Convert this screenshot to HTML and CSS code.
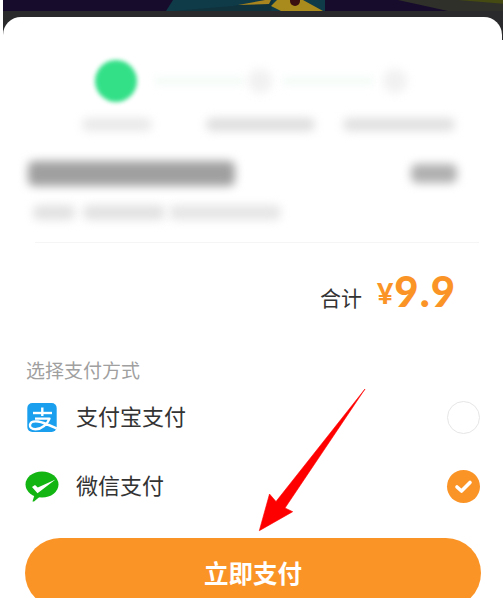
FILE: index.html
```html
<!DOCTYPE html>
<html lang="zh">
<head>
<meta charset="utf-8">
<title>支付</title>
<link rel="stylesheet" href="styles.css">
</head>
<body>
<div class="page">
  <div class="backdrop">
    <svg class="backdrop-art" width="500" height="11" viewBox="0 0 500 11" aria-hidden="true">
      <rect width="500" height="11" fill="#170c2c"/>
      <polygon points="163,11 170,0 322,0 322,11" fill="#0f3a48"/>
      <polygon points="170,11 230,6 262,0 270,0 268,11" fill="#10323c"/>
      <polygon points="235,5 262,0 268,0 266,4" fill="#a8851e"/>
      <polygon points="268,6 274,0 300,0 320,11 278,11" fill="#a98a1c"/>
      <circle cx="292" cy="1" r="5" fill="#3a1010"/>
      <polygon points="395,0 503,0 503,11 445,11" fill="#2f302a"/>
      <polygon points="455,0 503,0 503,4" fill="#454a12"/>
    </svg>
  </div>
  <main class="sheet">
    <div class="steps">
      <span class="dot dot-active"></span>
      <span class="line line-a"></span>
      <span class="dot dot-idle"></span>
      <span class="line line-b"></span>
      <span class="dot dot-idle dot-last"></span>
    </div>
    <div class="step-labels">
      <span class="blob label-a"></span>
      <span class="blob label-b"></span>
      <span class="blob label-c"></span>
    </div>
    <div class="title-row">
      <span class="blob title-blob"></span>
      <span class="blob price-blob"></span>
    </div>
    <div class="sub-row">
      <span class="blob sub-a"></span>
      <span class="blob sub-b"></span>
      <span class="blob sub-c"></span>
    </div>
    <div class="divider"></div>
    <div class="total">
      <span class="total-label">合计</span>
      <span class="total-currency">¥</span>
      <span class="total-value">9.9</span>
    </div>
    <div class="method-title">选择支付方式</div>
    <div class="option option-first">
      <svg class="option-icon" width="36" height="33" viewBox="0 0 36 33" aria-hidden="true">
        <rect x="2.3" y="2" width="29.4" height="29" rx="5" fill="#1a9fee"/>
        <g fill="none" stroke="#fff" stroke-width="2.4" stroke-linejoin="round">
          <path d="M8 12H27"/>
          <path d="M17.3 6.5V15"/>
          <path d="M10 17.6H24.5C22.5 23 16.5 28.3 10.5 28.3C6.5 28.3 4.6 26.2 5 23.8C5.5 21 9 20 13 20.5C19 21.3 25 24.5 31.7 27.6"/>
        </g>
      </svg>
      <span class="option-name">支付宝支付</span>
      <span class="radio"></span>
    </div>
    <div class="option">
      <svg class="option-icon" width="36" height="33" viewBox="0 0 36 33" aria-hidden="true">
        <ellipse cx="17" cy="14.5" rx="16.5" ry="13" fill="#12b512"/>
        <polygon points="9.5,25 7.5,31.5 9,31.5 15,26.5" fill="#12b512"/>
        <polygon points="30.5,9.5 12.5,23.2 7,17 10,15 12.8,17.6" fill="#fff"/>
      </svg>
      <span class="option-name">微信支付</span>
      <span class="radio radio-on">
        <svg width="19" height="15" viewBox="0 0 19 15" aria-hidden="true">
          <path d="M3 8L7.5 12L16 3.5" fill="none" stroke="#fff" stroke-width="3.6" stroke-linecap="round" stroke-linejoin="round"/>
        </svg>
      </span>
    </div>
    <button class="pay" type="button">立即支付</button>
  </main>
  <svg class="arrow" width="503" height="598" viewBox="0 0 503 598" aria-hidden="true">
    <path d="M365 389L276 501.5L269.5 494L259.3 530.7L292.7 511.7L285 508Z" fill="#ff0000" stroke="#ff0000" stroke-width="0.6" stroke-linejoin="round"/>
  </svg>
</div>
</body>
</html>
```
FILE: styles.css
```css
* { box-sizing: border-box; }
html, body { margin: 0; padding: 0; background: #fff; }
.page {
  position: relative;
  width: 503px;
  height: 598px;
  overflow: hidden;
  font-family: "Noto Sans CJK SC", "Liberation Sans", sans-serif;
}
.backdrop {
  height: 40px;
  margin-left: 3px;
  margin-bottom: -23px;
  background: #2a2a2c;
}
.backdrop-art { display: block; }
.sheet {
  position: relative;
  margin-left: 3px;
  width: 499px;
  height: 620px;
  background: #fff;
  border-radius: 18px 18px 0 0;
}
.steps {
  display: flex;
  align-items: center;
  height: 86px;
  padding: 42px 0 0 91px;
}
.dot { flex: none; border-radius: 50%; }
.dot-active { width: 42px; height: 42px; margin-left: 1px; margin-right: 1px; background: #33e088; filter: blur(2px); }
.dot-idle { width: 24px; height: 24px; background: #f1f1f1; margin-left: 4px; filter: blur(5px); }
.dot-last { margin-left: 9px; }
.line { flex: none; height: 8px; background: #f3fbf6; filter: blur(4px); }
.line-a { width: 90px; margin-left: 16px; }
.line-b { width: 92px; margin-left: 10px; }
.blob { display: block; flex: none; border-radius: 6px; filter: blur(5px); }
.step-labels {
  display: flex;
  height: 13px;
  margin-top: 15px;
  padding-left: 79px;
}
.label-a { width: 70px; background: #e9e9e9; }
.label-b { width: 109px; margin-left: 54px; background: #dedede; }
.label-c { width: 112px; margin-left: 28px; background: #e0e0e0; }
.title-row {
  display: flex;
  justify-content: space-between;
  align-items: center;
  height: 27px;
  margin-top: 29px;
  padding: 0 45px 0 25px;
}
.title-blob { width: 207px; height: 25px; background: #a0a0a0; }
.price-blob { width: 46px; height: 19px; background: #b0b0b0; }
.sub-row {
  display: flex;
  height: 15px;
  margin: 18px 0 0 30px;
}
.sub-a { width: 42px; background: #e2e2e2; }
.sub-b { width: 82px; margin-left: 8px; background: #e2e2e2; }
.sub-c { width: 112px; margin-left: 4px; background: #e6e6e6; }
.divider {
  height: 1px;
  margin: 22px 23px 0 32px;
  background: #f5f5f5;
}
.total {
  display: flex;
  justify-content: flex-end;
  align-items: flex-start;
  height: 50px;
  margin-top: 23px;
  padding-right: 46px;
  color: #fb9427;
}
.total-label {
  margin-top: 6px;
  margin-right: 15px;
  color: #333;
  font-size: 21px;
  line-height: 50px;
}
.total-currency {
  margin-top: 2px;
  margin-right: 1px;
  font-family: "Lato", sans-serif;
  font-size: 28px;
  font-weight: 900;
  line-height: 50px;
}
.total-value {
  font-family: "Lato", sans-serif;
  font-size: 42px;
  font-weight: 900;
  line-height: 50px;
  letter-spacing: 1px;
}
.method-title {
  height: 22px;
  margin: 43px 0 0 23px;
  color: #a0a0a0;
  font-size: 19px;
  line-height: 22px;
}
.option {
  display: flex;
  align-items: center;
  height: 33px;
  margin-top: 36px;
  padding: 0 22px;
}
.option-first { margin-top: 20px; }
.option-icon { flex: none; display: block; }
.option-name {
  margin-left: 15px;
  padding-bottom: 4px;
  color: #333;
  font-size: 22px;
  line-height: 29px;
}
.radio {
  display: flex;
  align-items: center;
  justify-content: center;
  width: 33px;
  height: 33px;
  margin-left: auto;
  border: 1.5px solid #e6e6e6;
  border-radius: 50%;
}
.radio-on { border: 0; background: #fb9427; }
.pay {
  display: block;
  width: 456px;
  height: 70px;
  margin: 35px 0 0 22px;
  padding: 0;
  border: 0;
  border-radius: 35px;
  background: #fb9427;
  color: #fff;
  font-family: inherit;
  font-size: 24.5px;
  font-weight: 700;
  line-height: 70px;
}
.arrow { position: absolute; left: 0; top: 0; pointer-events: none; }
```
